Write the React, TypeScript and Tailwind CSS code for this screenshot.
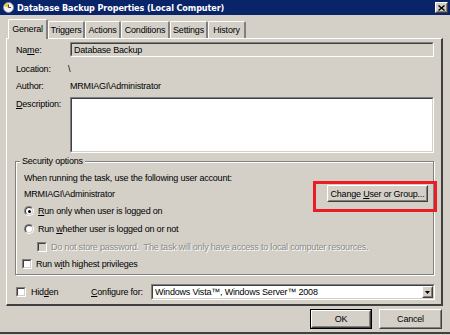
import React from 'react'

const font = { fontFamily: '"Liberation Sans", Arial, sans-serif' }
const titleFont = { fontFamily: '"DejaVu Sans Condensed", "Liberation Sans", sans-serif' }

function Sunken({ className, children }: { className?: string; children?: React.ReactNode }) {
  return (
    <div className={`border border-t-[#808080] border-l-[#808080] border-b-white border-r-white ${className ?? ''}`}>
      <div className="h-full w-full border border-t-[#404040] border-l-[#404040] border-b-[#d4d0c8] border-r-[#d4d0c8]">
        {children}
      </div>
    </div>
  )
}

function Raised({ className, children }: { className?: string; children?: React.ReactNode }) {
  return (
    <div className={`border border-t-white border-l-white border-b-[#404040] border-r-[#404040] bg-[#d4d0c8] ${className ?? ''}`}>
      <div className="flex h-full w-full items-center justify-center whitespace-nowrap border border-t-[#d4d0c8] border-l-[#d4d0c8] border-b-[#808080] border-r-[#808080]">
        {children}
      </div>
    </div>
  )
}

function Check({ disabled }: { disabled?: boolean }) {
  return (
    <Sunken className="h-[10px] w-[10px] shrink-0">
      <div className={`h-full w-full ${disabled ? 'bg-[#d4d0c8]' : 'bg-white'}`} />
    </Sunken>
  )
}

function Radio({ checked }: { checked?: boolean }) {
  return (
    <div className="flex h-[10px] w-[10px] shrink-0 items-center justify-center rounded-full border border-t-[#808080] border-l-[#808080] border-b-white border-r-white">
      <div className="flex h-[8px] w-[8px] items-center justify-center rounded-full border border-t-[#404040] border-l-[#404040] border-b-[#d4d0c8] border-r-[#d4d0c8] bg-white">
        {checked && <div className="h-[3px] w-[3px] rounded-full bg-black" />}
      </div>
    </div>
  )
}

const tabs = ['Triggers', 'Actions', 'Conditions', 'Settings', 'History']
const tabWidths = ['w-[37px]', 'w-[36px]', 'w-[49px]', 'w-[38px]', 'w-[38px]']

export default function App() {
  return (
    <div className="relative flex h-[335px] w-[450px] flex-col overflow-hidden whitespace-nowrap bg-[#d4d0c8] text-[9px] leading-[12px] tracking-[-0.2px] text-black" style={font}>
      {/* title bar */}
      <div className="flex h-[15px] shrink-0 items-center bg-[#0a246a] pl-[3px]">
        <svg width="11" height="11" viewBox="0 0 11 11">
          <circle cx="5.5" cy="5.5" r="5" fill="#f4f4f0" stroke="#8a93a8" strokeWidth="0.8" />
          <path d="M5.5 5.5 L5.5 1 A4.5 4.5 0 0 0 1.2 4.2 Z" fill="#f2c430" />
          <path d="M5.5 2.5 V5.5 H8" stroke="#3a3a3a" strokeWidth="0.9" fill="none" />
        </svg>
        <span className="ml-[3px] text-[9px] font-bold tracking-[-0.1px] text-white" style={titleFont}>
          Database Backup Properties (Local Computer)
        </span>
        <div className="ml-auto mr-[2px]">
          <Raised className="h-[11px] w-[13px]">
            <svg width="7" height="6" viewBox="0 0 7 6">
              <path d="M0.5 0.5 L6.5 5.5 M6.5 0.5 L0.5 5.5" stroke="#000" strokeWidth="1.4" />
            </svg>
          </Raised>
        </div>
      </div>

      {/* tabs */}
      <div className="ml-[8px] mt-[3px] flex h-[20px] items-end">
        <div className="relative z-10 -mb-[1px] flex h-[20px] w-[40px] items-center justify-center rounded-t-[2px] border-l border-t border-r-2 border-l-white border-t-white border-r-[#808080] bg-[#d4d0c8] pb-[1px]">
          General
        </div>
        {tabs.map((t, i) => (
          <div
            key={t}
            className={`flex h-[17px] ${tabWidths[i]} items-center justify-center rounded-t-[2px] border-l border-t border-r-2 border-l-white border-t-white border-r-[#808080]`}
          >
            {t}
          </div>
        ))}
      </div>

      {/* tab panel */}
      <div className="ml-[6px] h-[268px] w-[437px] border-l border-t border-l-white border-t-white border-b-2 border-r-2 border-b-[#404040] border-r-[#404040]">
        <div className="h-full w-full pt-[3px]">
          {/* name */}
          <div className="flex h-[15px] items-center">
            <span className="w-[63px] pl-[9px]">
              Na<span className="underline">m</span>e:
            </span>
            <Sunken className="h-[15px] w-[364px]">
              <div className="flex h-full items-center bg-[#d4d0c8] pl-[2px]">Database Backup</div>
            </Sunken>
          </div>
          <div className="flex h-[24px] items-center">
            <span className="w-[61px] pl-[9px]">Location:</span>
            <span>\</span>
          </div>
          <div className="flex h-[10px] items-center">
            <span className="w-[63px] pl-[9px]">Author:</span>
            <span>MRMIAGI\Administrator</span>
          </div>
          <div className="mt-[6px] flex h-[56px]">
            <span className="w-[63px] pl-[9px] pt-[1px]">
              <span className="underline">D</span>escription:
            </span>
            <Sunken className="h-[56px] w-[364px]">
              <div className="h-full w-full bg-white" />
            </Sunken>
          </div>

          {/* security options */}
          <div className="relative ml-[8px] mt-[8px] h-[114px] w-[419px] border border-[#808080] shadow-[1px_1px_0_#fff,inset_1px_1px_0_#fff]">
            <span className="absolute -top-[7px] left-[4px] bg-[#d4d0c8] px-[2px]">Security options</span>
            <div className="pl-[8px] pt-[8px]">
              <div className="flex h-[15px] items-center">When running the task, use the following user account:</div>
              <div className="flex h-[17px] items-center">
                <span>MRMIAGI\Administrator</span>
                <div className="relative ml-auto mr-[5px]">
                  <Raised className="h-[17px] w-[101px]">
                    <span>
                      Change <span className="underline">U</span>ser or Group...
                    </span>
                  </Raised>
                  <div className="absolute -bottom-[10px] -left-[14px] -right-[9px] -top-[4px] border-[3px] border-[#ec1c24]" />
                </div>
              </div>
              <div className="flex h-[18px] items-center gap-[4px]">
                <Radio checked />
                <span>
                  <span className="underline">R</span>un only when user is logged on
                </span>
              </div>
              <div className="flex h-[18px] items-center gap-[4px]">
                <Radio />
                <span>
                  Run <span className="underline">w</span>hether user is logged on or not
                </span>
              </div>
              <div className="ml-[13px] flex h-[18px] items-center gap-[4px]">
                <Check disabled />
                <span className="text-[#8a8a86] [text-shadow:1px_1px_0_#fff]">
                  Do not store password.&nbsp; The task will only have access to local computer resources.
                </span>
              </div>
              <div className="-ml-[2px] flex h-[16px] items-center gap-[4px]">
                <Check />
                <span>
                  Run w<span className="underline">i</span>th highest privileges
                </span>
              </div>
            </div>
          </div>

          {/* hidden / configure */}
          <div className="mt-[9px] flex h-[16px] items-center">
            <div className="ml-[9px]">
              <Check />
            </div>
            <span className="ml-[5px] w-[60px]">
              Hid<span className="underline">d</span>en
            </span>
            <span className="w-[60px]">
              <span className="underline">C</span>onfigure for:
            </span>
            <Sunken className="h-[16px] w-[284px]">
              <div className="flex h-full items-center bg-white pl-[2px]">
                <span className="flex-1">Windows Vista™, Windows Server™ 2008</span>
                <Raised className="h-full w-[11px]">
                  <svg width="5" height="3" viewBox="0 0 5 3">
                    <path d="M0 0 H5 L2.5 3 Z" fill="#000" />
                  </svg>
                </Raised>
              </div>
            </Sunken>
          </div>
        </div>
      </div>

      {/* buttons */}
      <div className="mt-[3px] flex justify-end gap-[7px] pr-[8px]">
        <div className="border border-black">
          <Raised className="h-[18px] w-[60px]">OK</Raised>
        </div>
        <Raised className="h-[20px] w-[63px]">Cancel</Raised>
      </div>

      <div className="absolute bottom-[1px] left-0 h-[2px] w-full bg-[#404040]" />
    </div>
  )
}
